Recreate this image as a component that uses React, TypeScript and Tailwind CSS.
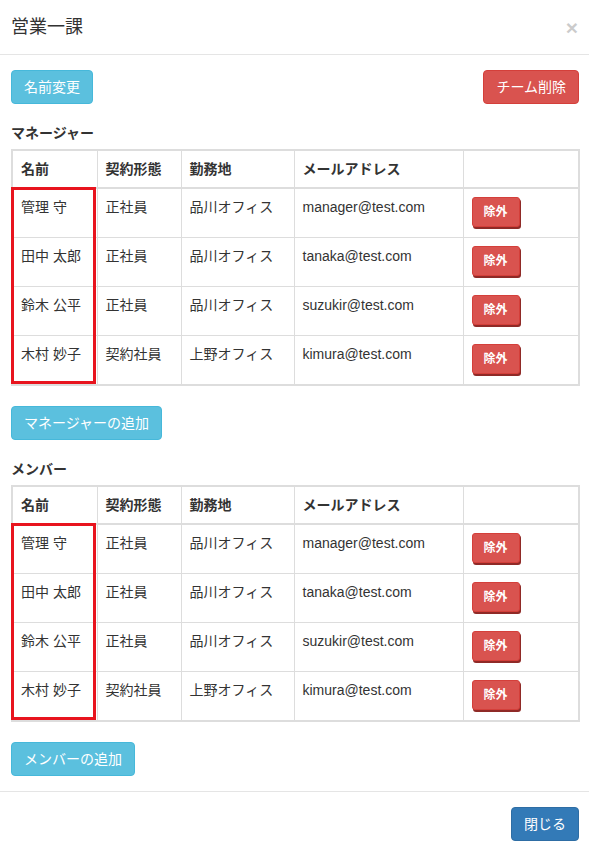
import React from 'react';

type Person = { name: string; type: string; office: string; email: string };

const people: Person[] = [
    { name: '管理 守', type: '正社員', office: '品川オフィス', email: 'manager@test.com' },
    { name: '田中 太郎', type: '正社員', office: '品川オフィス', email: 'tanaka@test.com' },
    { name: '鈴木 公平', type: '正社員', office: '品川オフィス', email: 'suzukir@test.com' },
    { name: '木村 妙子', type: '契約社員', office: '上野オフィス', email: 'kimura@test.com' },
];

const font = { fontFamily: '"Liberation Sans", "Noto Sans CJK JP", sans-serif' };

function MemberTable({ rows }: { rows: Person[] }) {
    return (
        <div className="relative">
            <table className="w-[567px] table-fixed border-collapse border-2 border-[#ddd] text-[14px] leading-5 text-[#333]">
                <colgroup>
                    <col className="w-[85px]" />
                    <col className="w-[84px]" />
                    <col className="w-[113px]" />
                    <col className="w-[169px]" />
                    <col className="w-[116px]" />
                </colgroup>
                <thead>
                    <tr>
                        <th className="border border-[#ddd] border-b-2 p-2 text-left font-bold align-bottom">名前</th>
                        <th className="border border-[#ddd] border-b-2 p-2 text-left font-bold align-bottom">契約形態</th>
                        <th className="border border-[#ddd] border-b-2 p-2 text-left font-bold align-bottom">勤務地</th>
                        <th className="border border-[#ddd] border-b-2 p-2 text-left font-bold align-bottom">メールアドレス</th>
                        <th className="border border-[#ddd] border-b-2 p-2 text-left font-bold align-bottom"></th>
                    </tr>
                </thead>
                <tbody>
                    {rows.map(p => (
                        <tr key={p.email}>
                            <td className="border border-[#ddd] p-2 align-top">{p.name}</td>
                            <td className="border border-[#ddd] p-2 align-top">{p.type}</td>
                            <td className="border border-[#ddd] p-2 align-top">{p.office}</td>
                            <td className="border border-[#ddd] p-2 align-top">{p.email}</td>
                            <td className="border border-[#ddd] p-2 align-top">
                                <button className="block w-[48px] h-[30px] mb-[2px] rounded-[3px] bg-[#d9534f] border border-[#d43f3a] shadow-[1px_2px_0_#8f2a27] text-white text-[12px] font-bold leading-none">除外</button>
                            </td>
                        </tr>
                    ))}
                </tbody>
            </table>
            {/* annotation box around the name column */}
            <div className="absolute left-0 top-[38px] w-[85px] h-[197px] border-[3px] border-[#e8141e] pointer-events-none" />
        </div>
    );
}

export default function App() {
    return (
        <div className="w-[589px] h-[846px] overflow-hidden bg-white text-[#333]" style={font}>
            <div className="flex items-center justify-between pl-[11px] pr-[10px] py-[15px] border-b border-[#e5e5e5]">
                <h4 className="text-[18px] leading-[24px]">営業一課</h4>
                <button className="text-[21px] leading-none font-bold text-black opacity-20 pr-[1px]">×</button>
            </div>

            <div className="pl-[11px] pr-[10px] pt-[15px] pb-[15px]">
                <div className="flex justify-between">
                    <button className="h-[34px] px-3 rounded bg-[#5bc0de] border border-[#46b8da] text-white text-[14px]">名前変更</button>
                    <button className="h-[34px] px-3 rounded bg-[#d9534f] border border-[#d43f3a] text-white text-[14px]">チーム削除</button>
                </div>

                <div className="mt-[19px] mb-[6px] text-[14px] leading-5 font-bold">マネージャー</div>
                <MemberTable rows={people} />
                <button className="mt-[20px] h-[34px] px-3 rounded bg-[#5bc0de] border border-[#46b8da] text-white text-[14px]">マネージャーの追加</button>

                <div className="mt-[19px] mb-[6px] text-[14px] leading-5 font-bold">メンバー</div>
                <MemberTable rows={people} />
                <button className="mt-[20px] h-[34px] px-3 rounded bg-[#5bc0de] border border-[#46b8da] text-white text-[14px]">メンバーの追加</button>
            </div>

            <div className="flex justify-end pl-[11px] pr-[10px] py-[15px] border-t border-[#e5e5e5]">
                <button className="h-[34px] px-3 rounded bg-[#337ab7] border border-[#2e6da4] text-white text-[14px]">閉じる</button>
            </div>
        </div>
    );
}
